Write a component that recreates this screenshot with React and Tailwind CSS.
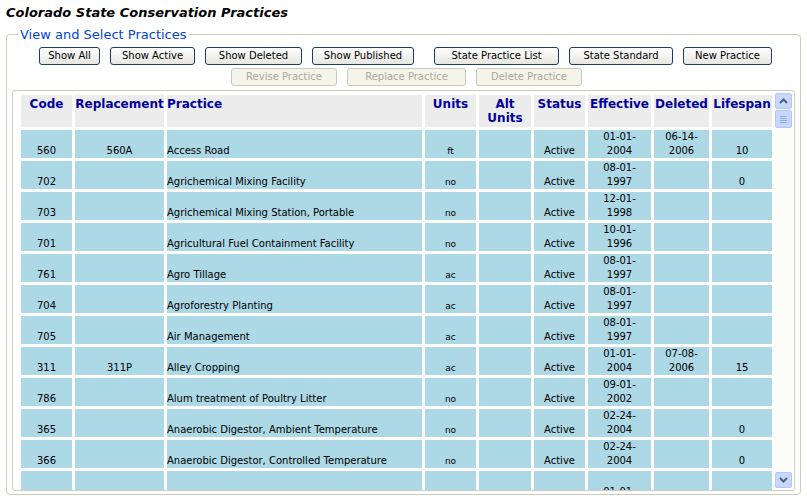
const rows = [
  ["560", "560A", "Access Road", "ft", "01-01-", "2004", "06-14-", "2006", "10"],
  ["702", "", "Agrichemical Mixing Facility", "no", "08-01-", "1997", "", "", "0"],
  ["703", "", "Agrichemical Mixing Station, Portable", "no", "12-01-", "1998", "", "", ""],
  ["701", "", "Agricultural Fuel Containment Facility", "no", "10-01-", "1996", "", "", ""],
  ["761", "", "Agro Tillage", "ac", "08-01-", "1997", "", "", ""],
  ["704", "", "Agroforestry Planting", "ac", "08-01-", "1997", "", "", ""],
  ["705", "", "Air Management", "ac", "08-01-", "1997", "", "", ""],
  ["311", "311P", "Alley Cropping", "ac", "01-01-", "2004", "07-08-", "2006", "15"],
  ["786", "", "Alum treatment of Poultry Litter", "no", "09-01-", "2002", "", "", ""],
  ["365", "", "Anaerobic Digestor, Ambient Temperature", "no", "02-24-", "2004", "", "", "0"],
  ["366", "", "Anaerobic Digestor, Controlled Temperature", "no", "02-24-", "2004", "", "", "0"],
  ["", "", "", "", "01-01-", "", "", "", ""],
];

const top = ["Show All", "Show Active", "Show Deleted", "Show Published", "State Practice List", "State Standard", "New Practice"];
const topW = ["w-[61px]", "w-[85px]", "w-[97px]", "w-[102px]", "w-[125px]", "w-[104px]", "w-[89px]"];
const topGap = ["", "ml-[10px]", "ml-[10px]", "ml-[10px]", "ml-[20px]", "ml-[10px]", "ml-[10px]"];

export default function App() {
  return (
    <div className="w-[807px] h-[501px] bg-white overflow-hidden text-black" style={{ fontFamily: "Verdana, 'DejaVu Sans', sans-serif" }}>
      <div className="pl-[6px] pt-[5px] text-[13px] font-bold italic leading-[16px]">Colorado State Conservation Practices</div>
      <div className="relative mx-[6px] mt-[13px] h-[461px] border border-[#d0cbb8] rounded-[4px]">
        <div className="absolute left-[11px] -top-[8px] bg-white px-[2px] text-[13px] text-[#0046d5] leading-[16px]">View and Select Practices</div>
        <div className="flex pl-[32px] pt-[12px]">
          {top.map((t, i) => (
            <button key={t} className={`${topW[i]} ${topGap[i]} h-[18px] text-[10px] leading-none rounded-[3px] border border-[#1c3c6c] bg-gradient-to-b from-white to-[#e6e5df]`}>{t}</button>
          ))}
        </div>
        <div className="flex pl-[224px] pt-[3px]">
          {["Revise Practice", "Replace Practice", "Delete Practice"].map((t, i) => (
            <button key={t} className={`${["w-[106px]", "w-[119px]", "w-[106px]"][i]} ${i ? "ml-[10px]" : ""} h-[18px] text-[10px] leading-none rounded-[3px] border border-[#cac8bb] bg-[#f5f4ea] text-[#aca899]`}>{t}</button>
          ))}
        </div>
        <div className="mx-[5px] mt-[4px] h-[401px] border border-[#d0cbb8] rounded-[3px] flex overflow-hidden">
          <div className="flex-1 overflow-hidden pl-[5px] pt-[1px]">
            <table className="border-separate border-spacing-[3px] text-[10px] leading-[14px] table-fixed">
              <colgroup>
                {[51, 89, 255, 51, 52, 51, 63, 55, 60].map((w, i) => <col key={i} style={{ width: w }} />)}
              </colgroup>
              <thead>
                <tr className="h-[32px] bg-[#ececec] text-[#0000a0] text-[12px] font-bold align-top">
                  <th className="text-center leading-[14px] pt-[2px]">Code</th>
                  <th className="text-center leading-[14px] pt-[2px]">Replacement</th>
                  <th className="text-left leading-[14px] pt-[2px]">Practice</th>
                  <th className="text-center leading-[14px] pt-[2px]">Units</th>
                  <th className="text-center leading-[14px] pt-[2px]">Alt<br />Units</th>
                  <th className="text-center leading-[14px] pt-[2px]">Status</th>
                  <th className="text-center leading-[14px] pt-[2px]">Effective</th>
                  <th className="text-center leading-[14px] pt-[2px]">Deleted</th>
                  <th className="text-center leading-[14px] pt-[2px]">Lifespan</th>
                </tr>
              </thead>
              <tbody>
                {rows.map((r, i) => (
                  <tr key={i} className="h-[28px] bg-[#add8e6] align-bottom">
                    <td className="text-center">{r[0]}</td>
                    <td className="text-center">{r[1]}</td>
                    <td className="text-left whitespace-nowrap">{r[2]}</td>
                    <td className="text-center text-[9px]">{r[3]}</td>
                    <td></td>
                    <td className="text-center">{r[0] ? "Active" : ""}</td>
                    <td className="text-center">{r[4]}{r[5] && <><br />{r[5]}</>}</td>
                    <td className="text-center">{r[6]}{r[7] && <><br />{r[7]}</>}</td>
                    <td className="text-center">{r[8]}</td>
                  </tr>
                ))}
              </tbody>
            </table>
          </div>
          <div className="w-[17px] mr-[2px] my-[2px] bg-[#fbfbf8] flex flex-col justify-between">
            <div>
              <div className="h-[16px] rounded-[2px] border border-[#b4c8f6] bg-[#c8d8fc] flex items-center justify-center">
                <svg width="9" height="6" viewBox="0 0 9 6"><path d="M1 5 L4.5 1.5 L8 5" stroke="#4d6185" strokeWidth="2" fill="none" /></svg>
              </div>
              <div className="mt-[1px] h-[18px] rounded-[2px] border border-[#b4c8f6] bg-[#c8d8fc] flex flex-col items-center justify-center gap-[1px]">
                {[0, 1, 2, 3].map((k) => <div key={k} className="w-[7px] h-px bg-[#8cb0f8]" />)}
              </div>
            </div>
            <div className="h-[16px] rounded-[2px] border border-[#b4c8f6] bg-[#c8d8fc] flex items-center justify-center">
              <svg width="9" height="6" viewBox="0 0 9 6"><path d="M1 1 L4.5 4.5 L8 1" stroke="#4d6185" strokeWidth="2" fill="none" /></svg>
            </div>
          </div>
        </div>
      </div>
    </div>
  );
}
